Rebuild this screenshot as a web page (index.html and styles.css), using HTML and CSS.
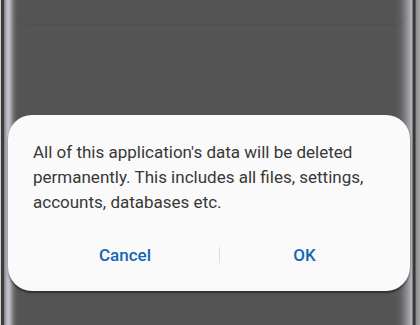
FILE: index.html
```html
<!DOCTYPE html>
<html>
<head>
<meta charset="utf-8">
<link rel="stylesheet" href="styles.css">
</head>
<body>
<div class="phone">
  <div class="prev-card"></div>
  <div class="dialog">
    <p class="message">All of this application's data will be deleted permanently. This includes all files, settings, accounts, databases etc.</p>
    <div class="actions">
      <button class="btn">Cancel</button>
      <span class="divider"></span>
      <button class="btn">OK</button>
    </div>
  </div>
</div>
</body>
</html>
```
FILE: styles.css
```css
html, body {
  margin: 0;
  padding: 0;
  width: 420px;
  height: 325px;
  overflow: hidden;
  background: #9a9a9a;
}
.phone {
  width: 420px;
  height: 325px;
  display: flex;
  flex-direction: column;
  box-sizing: border-box;
  background: linear-gradient(to right,
    #cfcfcf 0px, #cfcfcf 1px,
    #3c3c3c 1px, #3c3c3c 4px,
    #7c7c84 4px, #a9a9b1 6px, #c4c4cc 8px, #b4b4bc 10px, #7a7a7e 13px, #5a5a5a 16px, #545454 19px,
    #545454 394px, #5e5e60 400px, #7e7e84 405px, #a8a8b0 410px, #b6b6be 412px,
    #404040 413px, #2f2f2f 415px,
    #8e8e8e 416px, #a4a4a4 420px);
  font-family: Roboto, "Noto Sans", sans-serif;
}
.prev-card {
  height: 24px;
  margin: 0 10px 0 14px;
  border-bottom: 1px solid rgba(0, 0, 0, 0.06);
  border-radius: 0 0 16px 16px;
  background: transparent;
  flex: none;
}
.dialog {
  margin: 90px 10px 0 8px;
  background: #fafafa;
  border-radius: 24px;
  box-shadow: 0 2px 2px rgba(0, 0, 0, 0.45);
  padding: 25px 25px 26px 25px;
}
.message {
  margin: 0;
  font-size: 17px;
  line-height: 25px;
  color: #383838;
}
.actions {
  display: grid;
  grid-template-columns: 188px 1px 1fr;
  align-items: center;
  margin: 30px -4px 0 -2px;
  height: 20px;
}
.btn {
  background: none;
  border: 0;
  padding: 0;
  font-family: Roboto, "Noto Sans", sans-serif;
  font-weight: 500;
  font-size: 17px;
  line-height: 20px;
  color: #1565b8;
}
.divider {
  width: 1px;
  height: 16px;
  background: #dedede;
}
```
